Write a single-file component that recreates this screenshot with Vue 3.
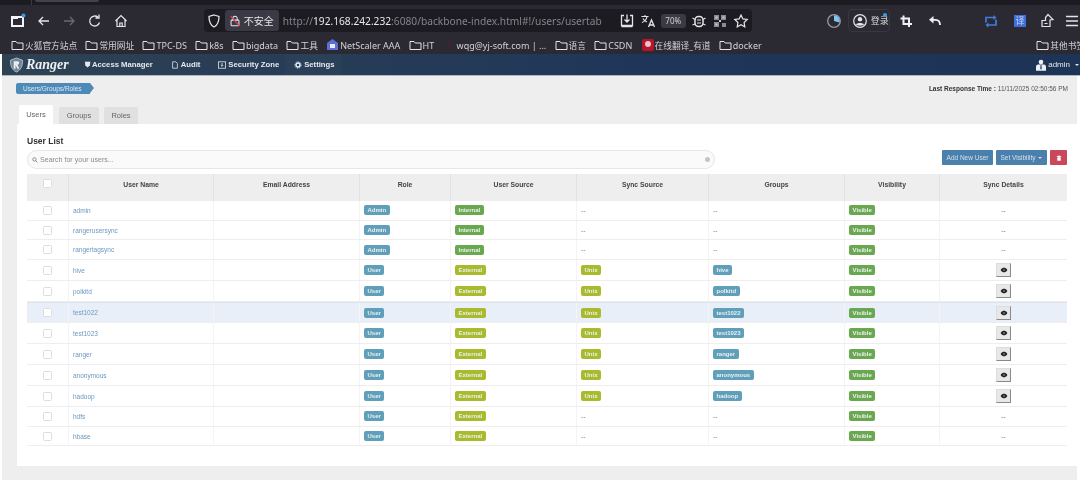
<script setup>
const bookmarks = [
  { t: '火狐官方站点', k: 'f', c: 1 }, { t: '常用网址', k: 'f', c: 1 }, { t: 'TPC-DS', k: 'f' }, { t: 'k8s', k: 'f' },
  { t: 'bigdata', k: 'f' }, { t: '工具', k: 'f', c: 1 }, { t: 'NetScaler AAA', k: 'n' }, { t: 'HT', k: 'f' },
  { t: 'wqg@yj-soft.com | ...', k: 'r' }, { t: '语言', k: 'f', c: 1 }, { t: 'CSDN', k: 'f' },
  { t: '在线翻译_有道', k: 'y', c: 1 }, { t: 'docker', k: 'f' }
]
const heads = ['User Name', 'Email Address', 'Role', 'User Source', 'Sync Source', 'Groups', 'Visibility', 'Sync Details']
const rows = [
  { n: 'admin', r: 'Admin', s: 'Internal' },
  { n: 'rangerusersync', r: 'Admin', s: 'Internal' },
  { n: 'rangertagsync', r: 'Admin', s: 'Internal' },
  { n: 'hive', r: 'User', s: 'External', u: 1, g: 'hive' },
  { n: 'polkitd', r: 'User', s: 'External', u: 1, g: 'polkitd' },
  { n: 'test1022', r: 'User', s: 'External', u: 1, g: 'test1022', hl: 1 },
  { n: 'test1023', r: 'User', s: 'External', u: 1, g: 'test1023' },
  { n: 'ranger', r: 'User', s: 'External', u: 1, g: 'ranger' },
  { n: 'anonymous', r: 'User', s: 'External', u: 1, g: 'anonymous' },
  { n: 'hadoop', r: 'User', s: 'External', u: 1, g: 'hadoop' },
  { n: 'hdfs', r: 'User', s: 'External' },
  { n: 'hbase', r: 'User', s: 'External' }
]
</script>

<template>
  <div class="page">
    <div class="topstrip"><i class="tabline"></i><i class="tabpiece"></i></div>
    <div class="toolbar">
      <div class="navicons">
        <svg class="ic" viewBox="0 0 16 16"><rect x="2" y="4" width="11" height="9" fill="none" stroke="#f4f4f6" stroke-width="2"/><rect x="2" y="4" width="6" height="2" fill="#f4f4f6"/><circle cx="13.5" cy="2.5" r="2" fill="#3c9ae8"/></svg>
        <svg class="ic" viewBox="0 0 16 16"><path d="M13 8H3M7 4L3 8l4 4" fill="none" stroke="#e4e4ea" stroke-width="1.3"/></svg>
        <svg class="ic" viewBox="0 0 16 16"><path d="M3 8h10M9 4l4 4-4 4" fill="none" stroke="#6b6a73" stroke-width="1.3"/></svg>
        <svg class="ic" viewBox="0 0 16 16"><path d="M12.5 9.5A5 5 0 1 1 11 4.2M12 1.5v3.500H8.500" fill="none" stroke="#e4e4ea" stroke-width="1.3"/></svg>
        <svg class="ic" viewBox="0 0 16 16"><path d="M2.500 8L8 2.500 13.500 8M4 7v6.500h8V7M6.800 13.500V10h2.400v3.500" fill="none" stroke="#e4e4ea" stroke-width="1.200"/></svg>
      </div>
      <div class="urlbar">
        <svg class="ic shield" viewBox="0 0 16 16"><path d="M8 2l5 1.500c0 5-1 8.500-5 10.500-4-2-5-5.500-5-10.500z" fill="none" stroke="#e4e4ea" stroke-width="1.300"/></svg>
        <div class="insecure">
          <svg class="ic lock" viewBox="0 0 16 16"><rect x="3.500" y="7" width="9" height="6.500" rx="1" fill="none" stroke="#e4e4ea" stroke-width="1.200"/><path d="M5.500 7V5a2.500 2.500 0 0 1 5 0v2" fill="none" stroke="#e4e4ea" stroke-width="1.200"/><path d="M3 2.500l10 11" stroke="#e2405a" stroke-width="1.400"/></svg>
          <span>不安全</span>
        </div>
        <div class="url"><span class="dim">http://</span><span class="host">192.168.242.232</span><span class="dim">:6080/backbone-index.html#!/users/usertab</span></div>
        <div class="urlicons">
          <svg class="ic" viewBox="0 0 16 16"><path d="M5 2.500H2.500v10h11v-10H11M8 1.500v7.500M5.500 6.500L8 9l2.500-2.500M2.500 13.500h11" fill="none" stroke="#e4e4ea" stroke-width="1.300"/></svg>
          <svg class="ic" viewBox="0 0 16 16"><path d="M1.500 3.500h7M5 2v1.500M7 3.500c-.5 3-2.500 5-5 6M3 5.500c1 2 2.500 3 4 3.500" fill="none" stroke="#e4e4ea" stroke-width="1.100"/><path d="M8.500 14l3-7 3 7M9.500 12h4" fill="none" stroke="#e4e4ea" stroke-width="1.300"/></svg>
          <div class="zoomchip">70%</div>
          <svg class="ic" viewBox="0 0 16 16"><rect x="4" y="3.500" width="8" height="10" rx="3.500" fill="none" stroke="#e4e4ea" stroke-width="1.500"/><path d="M1.500 5l2.500 1.500M14.500 5L12 6.500M1.500 12L4 11M14.500 12L12 11M6 7h4M6 10h4" stroke="#e4e4ea" stroke-width="1.100"/></svg>
          <svg class="ic" viewBox="0 0 16 16"><path d="M2 2h5v5H2zM9 2h5v5H9zM2 9h5v5H2zM10 10h4v4h-4z" fill="#8a8a92"/><path d="M3.500 3.500h2v2h-2zM10.500 3.500h2v2h-2zM3.500 10.500h2v2h-2zM7 7h2v2H7z" fill="#c7c7cc"/></svg>
          <svg class="ic" viewBox="0 0 16 16"><path d="M8 2l1.900 3.900 4.300.6-3.100 3 .7 4.300L8 11.800l-3.800 2 .7-4.300-3.100-3 4.300-.6z" fill="none" stroke="#e4e4ea" stroke-width="1.200"/></svg>
        </div>
      </div>
      <svg class="ic pie" viewBox="0 0 16 16"><circle cx="8" cy="8" r="6.300" fill="none" stroke="#9a9aa2" stroke-width="1.300"/><path d="M8 8V2.200a5.800 5.800 0 0 1 5.500 7.400z" fill="#7cc6f0"/></svg>
      <div class="login">
        <svg class="ic" viewBox="0 0 16 16"><circle cx="8" cy="8" r="6.300" fill="none" stroke="#e4e4ea" stroke-width="1.200"/><circle cx="8" cy="6.300" r="2.200" fill="#e4e4ea"/><path d="M4 11.500c1-2 7-2 8 0-1 1.500-7 1.500-8 0z" fill="#e4e4ea"/></svg>
        <span>登录</span>
        <i class="dot"></i>
      </div>
      <svg class="ic crop" viewBox="0 0 16 16"><path d="M5.500 2.500v8.500H14M2.500 5.500H11V14" fill="none" stroke="#f0f0f4" stroke-width="2"/></svg>
      <svg class="ic undo" viewBox="0 0 16 16"><path d="M6.500 3L2 6.800l4.500 3.800z" fill="#f0f0f4"/><path d="M5 6.800h3.500c3 0 4.500 2 4.500 5.200" fill="none" stroke="#f0f0f4" stroke-width="1.800"/></svg>
      <svg class="ic blue" viewBox="0 0 16 16"><path d="M3 9.500V4.500h9M13 6.500v5.500H4" fill="none" stroke="#3f7fe0" stroke-width="1.700"/><path d="M10.500 2l3 2.500-3 2.500zM5.500 9.500l-3 2.500 3 2.500z" fill="#3f7fe0"/></svg>
      <div class="trans">译</div>
      <svg class="ic share" viewBox="0 0 16 16"><path d="M9 1.500l5 5-3 .5v6.500H3v-6h3.500V4.500z" fill="none" stroke="#e4e4ea" stroke-width="1.200"/><path d="M5.500 10.500h3" stroke="#e4e4ea"/></svg>
      <svg class="ic burger" viewBox="0 0 16 16"><path d="M2 3.500h12M2 8h12M2 12.500h12" stroke="#e4e4ea" stroke-width="1.300"/></svg>
    </div>
    <div class="bookmarks">
      <div v-for="b in bookmarks" :key="b.t" class="bm" :class="{ cjk: b.c }">
        <svg v-if="b.k === 'f'" class="bmi" viewBox="0 0 13 12"><path d="M1 2.500h4l1.200 1.500H12v6.500H1z" fill="none" stroke="#e4e4ea" stroke-width="1"/></svg>
        <svg v-else-if="b.k === 'n'" class="bmi" viewBox="0 0 13 12"><path d="M6.500 0L12 4v7H1V4z" fill="#5c6fd6"/><rect x="4" y="5" width="5" height="4" fill="#e9ecff"/></svg>
        <svg v-else-if="b.k === 'r'" class="bmi ghost" viewBox="0 0 13 12"><path d="M3 2h7L6.500 10z" fill="#3a2630"/></svg>
        <svg v-else class="bmi" viewBox="0 0 13 12"><rect x="1" y="0" width="12" height="12" rx="2" fill="#b8142c"/><circle cx="7" cy="5" r="3" fill="#e8c4c8"/></svg>
        <span>{{ b.t }}</span>
      </div>
      <div class="bm other cjk">
        <svg class="bmi" viewBox="0 0 13 12"><path d="M1 2.500h4l1.200 1.500H12v6.500H1z" fill="none" stroke="#e4e4ea" stroke-width="1"/></svg>
        <span>其他书签</span>
      </div>
    </div>
    <div class="rangernav">
      <div class="brand">
        <svg class="logo" viewBox="0 0 16 16"><path d="M8 .5l6.500 2.500c0 6-1.500 10-6.500 12.500C3 13 1.500 9 1.500 3z" fill="#6f8499" stroke="#c9d3dc" stroke-width=".8"/><path d="M5 4h4.500c2 0 2 3.500-.5 3.500L11 12H9L7 8v4H5z" fill="#e8edf1"/></svg>
        <span>Ranger</span>
      </div>
      <div class="menu"><span class="sym">⛊</span>Access Manager</div>
      <div class="menu audit"><svg class="mi" viewBox="0 0 10 10"><path d="M2 1h4l2 2v6H2z" fill="none" stroke="#dfe5ea"/></svg>Audit</div>
      <div class="menu zone"><svg class="mi" viewBox="0 0 10 10"><rect x=".5" y="1" width="9" height="8" fill="none" stroke="#dfe5ea"/><path d="M5 2.500v4M3.500 5L5 6.500 6.500 5" fill="none" stroke="#dfe5ea"/></svg>Security Zone</div>
      <div class="menu settings"><svg class="mi" viewBox="0 0 10 10"><circle cx="5" cy="5" r="2.500" fill="none" stroke="#eef1f4" stroke-width="1.800"/><circle cx="5" cy="5" r="4" fill="none" stroke="#eef1f4" stroke-width="1" stroke-dasharray="1.500 1.500"/></svg>Settings</div>
      <div class="admin">
        <svg class="ai" viewBox="0 0 12 14"><circle cx="6" cy="3.500" r="2.800" fill="#eef1f4"/><path d="M0 14V9c0-2 2-2.500 3-2.500h6c1 0 3 .5 3 2.500v5z" fill="#eef1f4"/><path d="M5.300 7h1.400L7 12H5z" fill="#33506f"/></svg>
        <span>admin</span><i class="caret"></i>
      </div>
    </div>
    <div class="content">
      <div class="crumbrow">
        <div class="crumb">Users/Groups/Roles</div>
        <div class="resp"><b>Last Response Time :</b> 11/11/2025 02:50:56 PM</div>
      </div>
      <div class="tabs">
        <div class="tab active">Users</div>
        <div class="tab groups">Groups</div>
        <div class="tab roles">Roles</div>
      </div>
      <div class="card">
        <h3>User List</h3>
        <div class="tools">
          <div class="search">
            <svg class="si" viewBox="0 0 10 10"><circle cx="4" cy="4" r="2.800" fill="none" stroke="#777" stroke-width="1.300"/><path d="M6 6l3 3" stroke="#777" stroke-width="1.500"/></svg>
            <span>Search for your users...</span>
            <i class="clear"></i>
          </div>
          <div class="btn primary add">Add New User</div>
          <div class="btn primary vis">Set Visibility<i class="caret"></i></div>
          <div class="btn danger"><svg class="ti" viewBox="0 0 8 8"><path d="M1 1.500h6v1H1zM3 .5h2v1H3zM1.700 3h4.600v4.500H1.700z" fill="#fff"/></svg></div>
        </div>
        <div class="table">
          <div class="row head">
            <div class="cell center"><i class="check"></i></div>
            <div v-for="h in heads" :key="h" class="cell center">{{ h }}</div>
          </div>
          <div v-for="r in rows" :key="r.n" class="row" :class="{ tall: r.u, hl: r.hl }">
            <div class="cell center"><i class="check"></i></div>
            <div class="cell link">{{ r.n }}</div>
            <div class="cell"></div>
            <div class="cell"><span class="badge info">{{ r.r }}</span></div>
            <div class="cell"><span class="badge" :class="r.s === 'Internal' ? 'green' : 'lime'">{{ r.s }}</span></div>
            <div class="cell"><span v-if="r.u" class="badge lime">Unix</span><span v-else class="dash">--</span></div>
            <div class="cell"><span v-if="r.g" class="badge info">{{ r.g }}</span><span v-else class="dash">--</span></div>
            <div class="cell"><span class="badge green">Visible</span></div>
            <div class="cell center">
              <span v-if="r.u" class="eye"><svg viewBox="0 0 10 8"><path d="M.5 4C2 1.500 3.500 1 5 1s3 .5 4.500 3C8 6.500 6.500 7 5 7S2 6.500.5 4z" fill="#222"/><circle cx="5" cy="4" r="1" fill="#bbb"/></svg></span>
              <span v-else class="dash">--</span>
            </div>
          </div>
        </div>
      </div>
    </div>
  </div>
</template>

<style>
html, body { margin: 0; background: #fff; overflow: hidden; }
</style>

<style scoped>
.page { width: 1080px; height: 480px; overflow: hidden; font-family: "Liberation Sans", Arial, sans-serif; background: #fff; filter: blur(.45px); }
.topstrip { height: 5px; background: #1c1b22; position: relative; display: flex; }
.tabline { width: 1px; height: 5px; background: #3a3944; margin-left: 31px; }
.tabpiece { width: 64px; height: 2px; background: #42414d; margin-left: 3px; border-radius: 0 0 2px 2px; }
.toolbar { height: 31px; background: #2b2a33; display: flex; align-items: center; color: #e4e4ea; }
.ic { width: 16px; height: 16px; flex: none; display: block; }
.navicons { display: flex; gap: 9.700px; margin-left: 10px; width: 119px; }
.urlbar { margin-left: 75px; width: 548px; height: 23px; background: #1c1b22; border-radius: 4px; display: flex; align-items: center; flex: none; }
.shield { margin-left: 2px; }
.insecure { margin-left: 3px; width: 54px; height: 21px; background: #3a3944; border-radius: 3px; display: flex; align-items: center; font: 10px "Noto Sans CJK SC", sans-serif; flex: none; }
.lock { margin-left: 3px; margin-right: 2px; width: 14px; height: 14px; }
.url { margin-left: 4px; font: 10.200px "Noto Sans", sans-serif; white-space: nowrap; width: 336px; flex: none; overflow: hidden; }
.dim { color: #85848c; }
.host { color: #e8e8ec; }
.urlicons { display: flex; align-items: center; gap: 5px; }
.zoomchip { width: 25px; height: 14px; border-radius: 3px; background: #3a3944; font: 8px/14px "Noto Sans", sans-serif; text-align: center; color: #d0d0d6; }
.pie { margin-left: 74px; }
.login { margin-left: 6px; width: 45px; height: 23px; box-sizing: border-box; border: 1px solid #383742; border-radius: 4px; display: flex; align-items: center; gap: 3px; padding-left: 3px; position: relative; font: 9px "Noto Sans CJK SC", sans-serif; color: #d8d8dc; }
.dot { position: absolute; right: 2px; top: 3px; width: 4px; height: 4px; border-radius: 50%; background: #3c9ae8; }
.crop { margin-left: 8px; }
.undo { margin-left: 13px; }
.blue { margin-left: 40px; }
.trans { margin-left: 15px; width: 12px; height: 12px; background: #3f6fd8; color: #c8d4f4; font: 9px/12px "Noto Sans CJK SC", sans-serif; text-align: center; flex: none; }
.share { margin-left: 13px; }
.burger { margin-left: 9px; }
.bookmarks { height: 18px; background: #2b2a33; display: flex; align-items: center; padding-left: 11px; gap: 8.300px; font: 9px "Noto Sans", "Noto Sans CJK SC", sans-serif; color: #d2d2d8; white-space: nowrap; overflow: hidden; }
.bm { display: flex; align-items: center; gap: 1px; flex: none; }
.cjk { font-size: 8.700px; }
.bmi { width: 13px; height: 12px; flex: none; }
.other { margin-left: auto; margin-right: -5px; }
.rangernav { height: 21px; background: linear-gradient(90deg, #2e4254 0%, #1f3659 60%, #1d3456 100%); border-bottom: 1px solid #aeb6be; display: flex; align-items: center; color: #e4e8ec; font-size: 7.700px; font-weight: bold; margin-left: 2px; position: relative; }
.brand { display: flex; align-items: center; width: 78px; padding-left: 7px; box-sizing: border-box; flex: none; font: italic bold 14px "Liberation Serif", serif; color: #eef1f4; gap: 2px; }
.logo { width: 15px; height: 16px; flex: none; }
.menu { display: flex; align-items: center; gap: 2px; white-space: nowrap; height: 21px; padding: 0 5px; }
.sym { font-size: 7px; }
.mi { width: 8px; height: 8px; flex: none; }
.audit { margin-left: 8px; }
.zone { margin-left: 8px; }
.settings { width: 56px; background: #2a3f58; padding-left: 9px; box-sizing: border-box; margin-left: 1px; }
.admin { margin-left: auto; margin-right: 1px; display: flex; align-items: center; gap: 2px; font-size: 8px; font-weight: normal; }
.ai { width: 10px; height: 12px; }
.caret { display: inline-block; border: 2px solid transparent; border-top: 2px solid currentColor; border-bottom: 0; margin-left: 3px; vertical-align: middle; }
.content { padding: 0 3px 0 2px; background: #eee; height: 404px; box-sizing: border-box; background-clip: content-box; }
.crumbrow { display: flex; justify-content: space-between; align-items: center; height: 29px; padding: 0 9px 4px 14px; box-sizing: border-box; }
.crumb { width: 74px; height: 11px; background: #4e8ab8; color: #dbe8f2; font-size: 6.500px; line-height: 11px; padding-left: 7px; box-sizing: border-box; border-radius: 2px 0 0 2px; position: relative; white-space: nowrap; }
.crumb::after { content: ""; position: absolute; left: 100%; top: 0; border-left: 4px solid #4e8ab8; border-top: 5.500px solid transparent; border-bottom: 5.500px solid transparent; }
.resp { font-size: 6.500px; color: #555; }
.resp b { color: #333; }
.tabs { display: flex; height: 19px; padding-left: 17px; font-size: 7.500px; color: #666; }
.tab { background: #e0e0e0; height: 17px; align-self: flex-end; line-height: 17px; text-align: center; border-radius: 2px 2px 0 0; }
.tab.active { background: #fff; height: 19px; line-height: 19px; width: 34px; }
.groups { width: 40px; margin-left: 6px; }
.roles { width: 34px; margin-left: 5px; }
.card { margin-left: 15px; width: 1060px; height: 342px; background: #fff; padding: 0 10px; box-sizing: border-box; }
.card h3 { margin: 0; padding-top: 12px; font-size: 8.500px; line-height: 10px; font-weight: bold; color: #333; height: 26px; box-sizing: border-box; }
.tools { display: flex; align-items: flex-start; height: 24px; font-size: 7.100px; }
.search { width: 688px; height: 19px; box-sizing: border-box; border: 1px solid #e6e6e6; border-radius: 10px; background: #fafafa; display: flex; align-items: center; padding: 0 4px 0 4px; color: #8a8a8a; gap: 2px; }
.si { width: 6px; height: 6px; flex: none; }
.clear { margin-left: auto; width: 5px; height: 5px; border-radius: 50%; background: #c4c4c4; }
.btn { height: 15px; line-height: 15px; text-align: center; color: #cfe0ee; border-radius: 1px; font-size: 6.500px; }
.primary { background: #4a80ab; }
.add { width: 51px; margin-left: 227px; }
.vis { width: 51px; margin-left: 3px; }
.danger { width: 17px; margin-left: 3px; background: #c9485b; display: flex; align-items: center; justify-content: center; }
.ti { width: 6px; height: 6px; }
.table { width: 1040px; }
.row { display: grid; grid-template-columns: 41px 145px 146px 91px 126px 132px 136px 95px 128px; height: 19.700px; box-sizing: border-box; border-bottom: 1px solid #eee; font-size: 6.800px; color: #555; }
.row.tall { height: 21px; }
.row.hl { background: #e8eff9; border-top: 1px solid #dde4ee; }
.head { height: 27px; background: #eee; font-weight: bold; color: #444; border-bottom: 0; }
.cell { display: flex; align-items: center; padding-left: 4px; border-left: 1px solid #f4f4f4; min-width: 0; box-sizing: border-box; }
.cell:first-child { border-left: 0; }
.cell.center { justify-content: center; padding-left: 0; }
.head .cell { align-items: flex-start; padding-top: 7px; border-left-color: #e2e2e2; font-size: 6.800px; }
.head .check { margin-top: -2px; }
.check { width: 7px; height: 7px; border: 1px solid #ddd; border-radius: 1.500px; background: #fff; display: block; }
.link { color: #6b97c0; font-size: 6.500px; }
.badge { display: inline-block; height: 10px; line-height: 10px; border-radius: 2px; padding: 0 3.500px; color: #e9f0f2; font-size: 6px; font-weight: bold; white-space: nowrap; }
.info { background: #5f9fb9; }
.lime { background: #a9bb2c; }
.green { background: #6aa84f; }
.dash { color: #777; }
.eye { width: 15px; height: 14px; box-sizing: border-box; border: 1px solid; border-color: #ddd #8a8a8a #8a8a8a #ddd; background: #e8e8ea; display: flex; align-items: center; justify-content: center; }
.eye svg { width: 8px; height: 6px; }
</style>
